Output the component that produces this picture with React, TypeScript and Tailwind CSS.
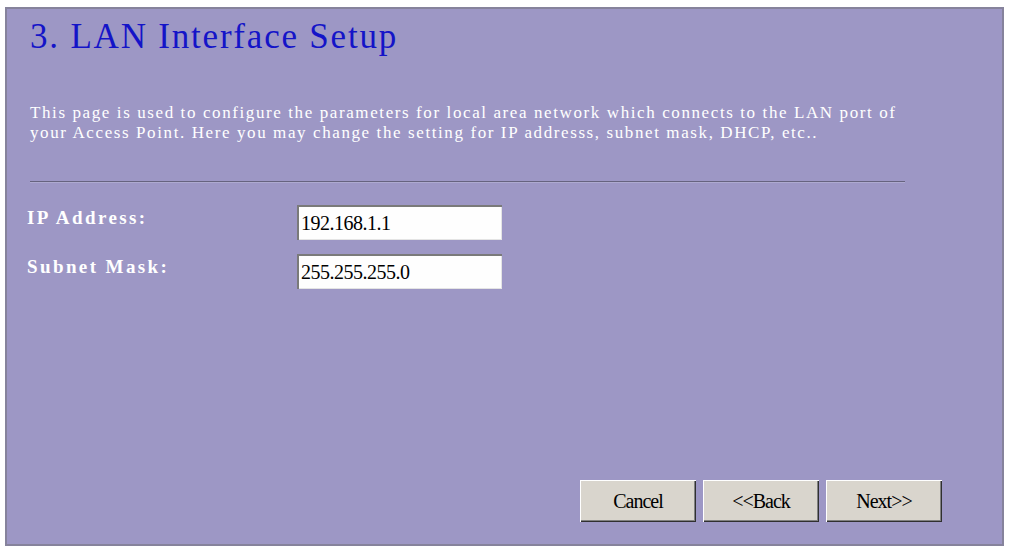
import React from "react";

const serif = { fontFamily: '"Liberation Serif", "Times New Roman", serif' };

function Field({ label, value }: { label: string; value: string }) {
  return (
    <div className="flex h-[35px] items-start">
      <div className="w-[270px] text-[19px] leading-[25px] font-bold tracking-[2.4px] text-white">
        {label}
      </div>
      <div className="flex h-[35px] w-[205px] items-center bg-[#fefefe] pl-[4px] shadow-[inset_2px_2px_#7a7a7a,inset_-1px_-1px_#e4e4e4] text-[20px] tracking-[-0.5px] text-black">
        {value}
      </div>
    </div>
  );
}

function Btn({ children }: { children: React.ReactNode }) {
  return (
    <button className="flex h-[42px] w-[116px] items-center justify-center bg-[#d9d5cd] text-[20px] tracking-[-1px] text-black shadow-[inset_1px_1px_#ffffff,inset_-1px_-1px_#303030,inset_-2px_-2px_#808080]">
      {children}
    </button>
  );
}

export default function App() {
  return (
    <div className="h-[548px] w-[1009px] bg-white pl-[5px] pt-[7px]" style={serif}>
      <div className="flex h-[539px] w-[999px] flex-col border-2 border-[#86839c] bg-[#9d97c5]">
        <div className="pl-[23px]">
          <h1 className="mt-[8px] text-[35px] leading-[40px] font-normal tracking-[1.8px] text-[#1414c8]">
            3. LAN Interface Setup
          </h1>
          <p className="mt-[46px] text-[17px] leading-[20px] tracking-[1.6px] text-white">
            This page is used to configure the parameters for local area network which connects to the LAN port of
            <br />
            your Access Point. Here you may change the setting for IP addresss, subnet mask, DHCP, etc..
          </p>
          <div className="mt-[38px] h-[2px] w-[875px] border-t border-b border-t-[#66637f] border-b-[#aeaad0]" />
        </div>
        <div className="mt-[22px] flex flex-col gap-[14px] pl-[20px]">
          <Field label="IP Address:" value="192.168.1.1" />
          <Field label="Subnet Mask:" value="255.255.255.0" />
        </div>
        <div className="flex-1" />
        <div className="flex justify-end gap-[7px] pb-[22px] pr-[60px]">
          <Btn>Cancel</Btn>
          <Btn>&lt;&lt;Back</Btn>
          <Btn>Next&gt;&gt;</Btn>
        </div>
      </div>
    </div>
  );
}
